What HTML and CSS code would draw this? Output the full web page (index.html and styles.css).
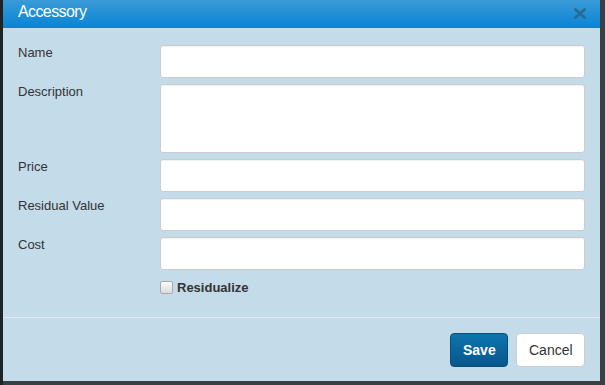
FILE: index.html
```html
<!DOCTYPE html>
<html lang="en">
<head>
    <meta charset="UTF-8">
    <meta name="viewport" content="width=device-width, initial-scale=1.0">
    <title>Accessory</title>
    <link rel="stylesheet" href="styles.css">
</head>
<body>
    <div class="modal">
        <div class="modal-header">
            <h3 class="modal-title">Accessory</h3>
            <button class="close" type="button" aria-label="Close">
                <svg width="12" height="11" viewBox="0 0 12 11">
                    <path d="M1.5 1.5 L10.5 9.5 M10.5 1.5 L1.5 9.5" stroke="currentColor" stroke-width="2.8" stroke-linecap="round"/>
                </svg>
            </button>
        </div>

        <div class="modal-body">
            <div class="form-row">
                <label for="name">Name</label>
                <input type="text" id="name">
            </div>
            <div class="form-row">
                <label for="description">Description</label>
                <textarea id="description"></textarea>
            </div>
            <div class="form-row">
                <label for="price">Price</label>
                <input type="text" id="price">
            </div>
            <div class="form-row">
                <label for="residual">Residual Value</label>
                <input type="text" id="residual">
            </div>
            <div class="form-row">
                <label for="cost">Cost</label>
                <input type="text" id="cost">
            </div>
            <div class="check-row">
                <label class="check">
                    <input type="checkbox" id="residualize"> Residualize
                </label>
            </div>
        </div>

        <div class="modal-footer">
            <button class="btn btn-primary" type="button">Save</button>
            <button class="btn btn-default" type="button">Cancel</button>
        </div>
    </div>
</body>
</html>
```

FILE: styles.css
```css
body {
    margin: 0;
    background-color: #3a3d42;
    font-family: "Liberation Sans", Arial, Helvetica, sans-serif;
    color: #333;
    height: 385px;
    overflow: hidden;
    box-shadow: inset 3px 0 0 #1f2321;
}
.modal {
    margin-left: 3px;
    width: 597px;
    background-color: #c4dbea;
}
.modal-header {
    height: 28px;
    box-sizing: border-box;
    display: flex;
    align-items: flex-start;
    justify-content: space-between;
    padding: 3px 14px 0 15px;
    background: linear-gradient(to bottom, #3a9bd6, #0884d5);
}
.modal-title {
    margin: 0;
    font-size: 16px;
    letter-spacing: -0.6px;
    font-weight: normal;
    color: #fff;
    line-height: 18px;
}
.close {
    border: none;
    background: none;
    padding: 0;
    margin-top: 5px;
    color: #2a6896;
    cursor: pointer;
    line-height: 0;
}
.modal-body {
    padding: 17px 15px 0;
}
.form-row {
    display: grid;
    grid-template-columns: 142px 1fr;
    align-items: start;
    margin-bottom: 6px;
}
.form-row label {
    font-size: 13px;
    line-height: 15px;
}
.form-row input,
.form-row textarea {
    display: block;
    width: 100%;
    height: 33px;
    box-sizing: border-box;
    border: 1px solid #ccc;
    border-radius: 3px;
    background-color: #fff;
    box-shadow: inset 0 1px 1px rgba(0, 0, 0, 0.06);
    font-size: 13px;
    padding: 6px 8px;
    resize: none;
}
.form-row textarea {
    height: 69px;
}
.check-row {
    padding-left: 142px;
    margin-top: 10px;
}
.check {
    display: flex;
    align-items: center;
    gap: 4px;
    font-size: 13px;
    font-weight: bold;
}
.check input {
    appearance: none;
    margin: 0;
    width: 13px;
    height: 13px;
    border: 1px solid #a9a9a9;
    border-radius: 2px;
    background: linear-gradient(to bottom, #fafafa, #dcdcdc);
}
.modal-footer {
    margin-top: 22px;
    border-top: 1px solid #dde9f2;
    padding: 15px 15px 14px;
    display: flex;
    justify-content: flex-end;
    gap: 8px;
}
.btn {
    height: 34px;
    padding: 0 12px;
    border-radius: 4px;
    font-family: "Liberation Sans", Arial, sans-serif;
    font-size: 14px;
    cursor: pointer;
}
.btn-primary {
    width: 58px;
    background: linear-gradient(to bottom, #0e74ad, #07578c);
    border: 1px solid #0a4d7a;
    color: #fff;
    font-weight: bold;
}
.btn-default {
    width: 69px;
    background-color: #fff;
    border: 1px solid #ccc;
    color: #333;
}
```
